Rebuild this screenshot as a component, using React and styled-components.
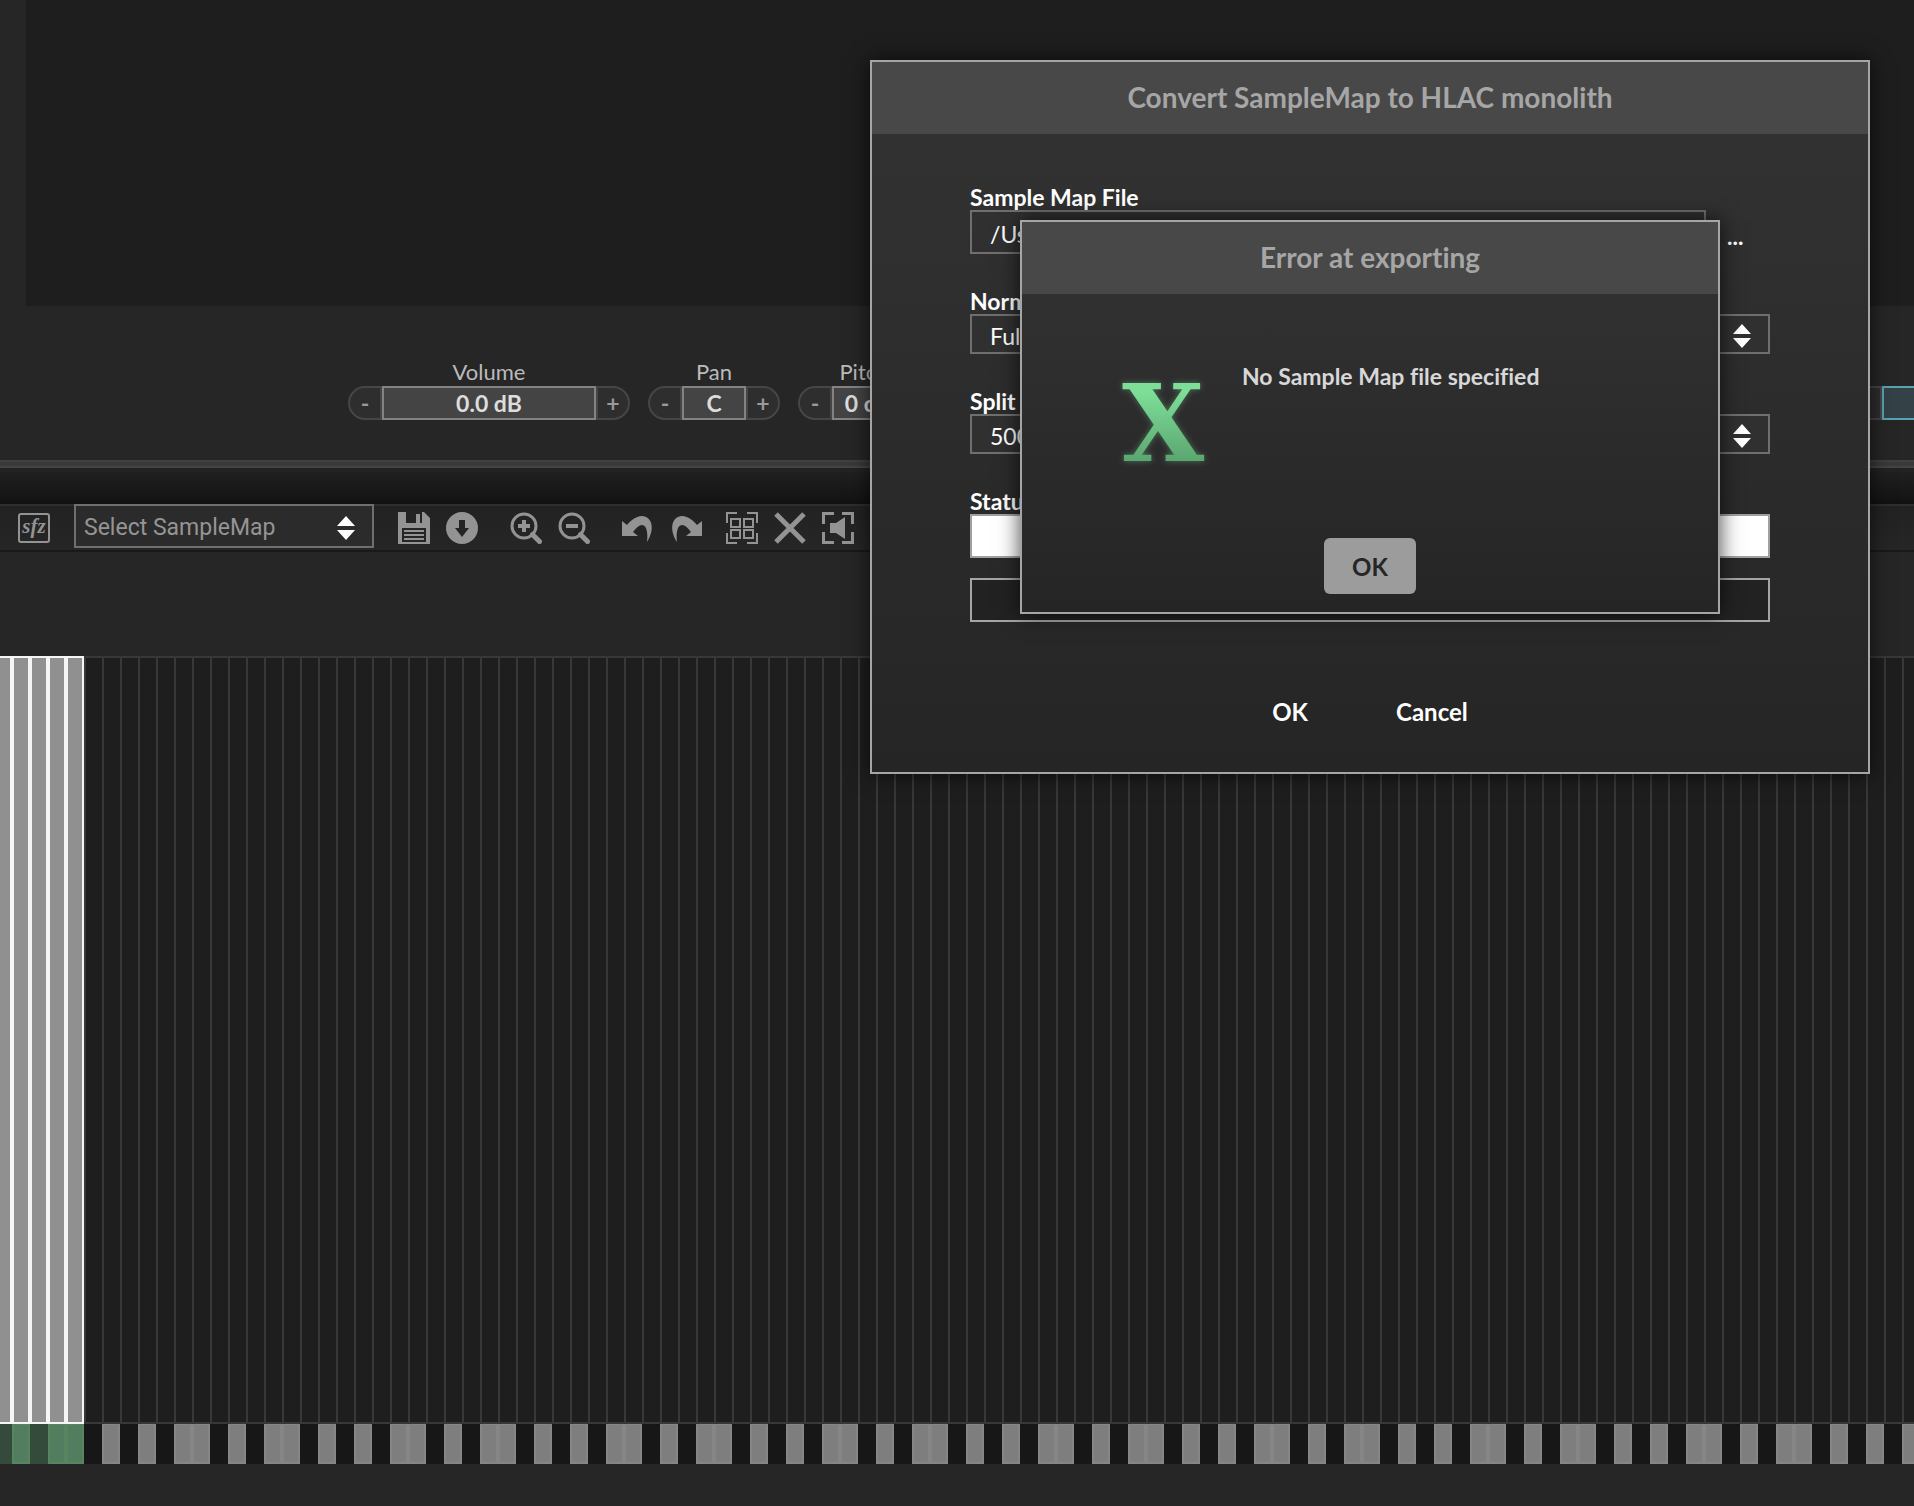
import React from 'react';
import styled, { createGlobalStyle, css } from 'styled-components';

const GlobalStyle = createGlobalStyle`
    * {
        box-sizing: border-box;
    }

    body {
        margin: 0;
        background: #262626;
        overflow: hidden;
    }

    button, input, select {
        font: inherit;
        margin: 0;
        border-radius: 0;
    }
`;

const NOTES = Array.from({ length: 128 }, (_, i) => i);
const SELECTED_NOTES = 5;

// the map is scrolled so that C# is the first note in view
const isBlackKey = (i) => [1, 3, 6, 8, 10].includes((i + 1) % 12);

function Icon({ children }) {
  return (
    <svg width="32" height="32" viewBox="0 0 32 32" fill="currentColor" aria-hidden="true">
      {children}
    </svg>
  );
}

function SfzIcon() {
  return (
    <Icon>
      <rect x="1" y="2" width="30" height="28" rx="2" fill="none" stroke="currentColor" strokeWidth="2" />
      <text x="16" y="21" textAnchor="middle" fontFamily="'Liberation Serif', serif" fontStyle="italic" fontWeight="bold" fontSize="21">sfz</text>
    </Icon>
  );
}

function SaveIcon() {
  return (
    <Icon>
      <path fillRule="evenodd" d="M0 0H8V11H24V0H26L32 6V32H0ZM4 16V30H28V16Z" />
      <path d="M18 2h4v9h-4zM6 18h20v2H6zM6 22h20v2H6zM6 26h20v2H6z" />
    </Icon>
  );
}

function DownloadIcon() {
  return (
    <Icon>
      <path fillRule="evenodd" d="M16 0A16 16 0 1 1 16 32A16 16 0 1 1 16 0ZM13 8V16H9L16 25L23 16H19V8Z" />
    </Icon>
  );
}

function ZoomIcon({ plus }) {
  return (
    <Icon>
      <circle cx="14" cy="14" r="12" fill="none" stroke="currentColor" strokeWidth="3" />
      <path d="M22.5 22.5L29.5 29.5" stroke="currentColor" strokeWidth="5" strokeLinecap="round" />
      <path d={plus ? 'M8 12h4V8h4v4h4v4h-4v4h-4v-4H8z' : 'M8 12h12v4H8z'} />
    </Icon>
  );
}

const undoPath = 'M0 9L5 13C11 6 18 2 24 5C32 9 31 21 25 30C26 22 25 13 20 13C17 13 14 16 11 20L16 24H0Z';

function UndoIcon() {
  return <Icon><path d={undoPath} /></Icon>;
}

function RedoIcon() {
  return <Icon><path d={undoPath} transform="translate(32 0) scale(-1 1)" /></Icon>;
}

const cornersPath = 'M1 11V1H11M21 1H31V11M31 21V31H21M11 31H1V21';

function SelectAllIcon() {
  return (
    <Icon>
      <path d={cornersPath} fill="none" stroke="currentColor" strokeWidth="2" />
      <path d="M5 7h9v8H5zM18 7h9v8h-9zM5 18h9v8H5zM18 18h9v8h-9z" fill="none" stroke="currentColor" strokeWidth="2" />
    </Icon>
  );
}

function DeselectIcon() {
  return (
    <Icon>
      <path d="M2 2L30 30M30 2L2 30" stroke="currentColor" strokeWidth="5" />
    </Icon>
  );
}

function PreviewIcon() {
  return (
    <Icon>
      <path d="M1.5 12V1.5H12M20 1.5H30.5V12M30.5 20V30.5H20M12 30.5H1.5V20" fill="none" stroke="currentColor" strokeWidth="3" />
      <path d="M8 11h6l9-6v22l-9-6H8z" />
    </Icon>
  );
}

function Arrows() {
  return (
    <ArrowIcon width="20" height="24" viewBox="0 0 20 24" fill="#ffffff" aria-hidden="true">
      <path d="M10 0L19 10H1ZM10 24L1 14H19Z" />
    </ArrowIcon>
  );
}

function Stepper({ id, label, value, width }) {
  return (
    <Control>
      <ControlLabel htmlFor={id}>{label}</ControlLabel>
      <StepperRow>
        <StepButton $side="left" aria-label={`${label} down`}>-</StepButton>
        <StepValue id={id} $width={width} defaultValue={value} />
        <StepButton $side="right" aria-label={`${label} up`}>+</StepButton>
      </StepperRow>
    </Control>
  );
}

function ErrorDialog() {
  return (
    <ErrorWindow role="alertdialog" aria-labelledby="error-title">
      <DialogTitle id="error-title">Error at exporting</DialogTitle>
      <ErrorBody>
        <Logo aria-hidden="true">X</Logo>
        <Message>No Sample Map file specified</Message>
      </ErrorBody>
      <ErrorFooter>
        <PrimaryButton>OK</PrimaryButton>
      </ErrorFooter>
    </ErrorWindow>
  );
}

function ConvertDialog() {
  return (
    <ConvertWindow role="dialog" aria-labelledby="convert-title">
      <DialogTitle id="convert-title">Convert SampleMap to HLAC monolith</DialogTitle>
      <Form>
        <Field>
          <FieldLabel htmlFor="file">Sample Map File</FieldLabel>
          <FileRow>
            <FileInput id="file" defaultValue="/Users" />
            <BrowseButton aria-label="Browse">...</BrowseButton>
          </FileRow>
        </Field>
        <Field>
          <FieldLabel htmlFor="normalise">Normalization</FieldLabel>
          <SelectBox $height={40}>
            <DialogSelect id="normalise"><option>Full Dynamics</option></DialogSelect>
            <Arrows />
          </SelectBox>
        </Field>
        <Field>
          <FieldLabel htmlFor="split">Split size</FieldLabel>
          <SelectBox $height={40}>
            <DialogSelect id="split"><option>500 MB</option></DialogSelect>
            <Arrows />
          </SelectBox>
        </Field>
        <Field>
          <FieldLabel htmlFor="status">Status</FieldLabel>
          <StatusInput id="status" readOnly />
          <ProgressBar role="progressbar" aria-label="Progress" />
        </Field>
      </Form>
      <Actions>
        <TextButton>OK</TextButton>
        <TextButton>Cancel</TextButton>
      </Actions>
      <ErrorDialog />
    </ConvertWindow>
  );
}

function App() {
  return (
    <Container>
      <GlobalStyle />
      <Waveform />

      <Controls>
        <Stepper id="volume" label="Volume" value="0.0 dB" width={214} />
        <Stepper id="pan" label="Pan" value="C" width={64} />
        <Stepper id="pitch" label="Pitch" value="0 ct" width={64} />
        <EdgeStepper>
          <StepButton $side="left" aria-label="Decrease">-</StepButton>
          <ActiveValue />
        </EdgeStepper>
      </Controls>

      <Divider />
      <TabBar />

      <Toolbar>
        <ToolButton aria-label="Import SFZ"><SfzIcon /></ToolButton>
        <MapSelectBox $height={44}>
          <MapSelect aria-label="Sample map"><option>Select SampleMap</option></MapSelect>
          <Arrows />
        </MapSelectBox>
        <ToolGroup>
          <ToolButton aria-label="Save"><SaveIcon /></ToolButton>
          <ToolButton aria-label="Export"><DownloadIcon /></ToolButton>
        </ToolGroup>
        <ToolGroup $wide>
          <ToolButton aria-label="Zoom in"><ZoomIcon plus /></ToolButton>
          <ToolButton aria-label="Zoom out"><ZoomIcon /></ToolButton>
        </ToolGroup>
        <ToolGroup $wide>
          <ToolButton aria-label="Undo"><UndoIcon /></ToolButton>
          <ToolButton aria-label="Redo"><RedoIcon /></ToolButton>
        </ToolGroup>
        <ToolGroup>
          <ToolButton aria-label="Select all"><SelectAllIcon /></ToolButton>
          <ToolButton aria-label="Deselect all"><DeselectIcon /></ToolButton>
          <ToolButton aria-label="Preview"><PreviewIcon /></ToolButton>
        </ToolGroup>
      </Toolbar>

      <MapArea>
        <NoteRow $grow>
          {NOTES.map((i) => <Zone key={i} $selected={i < SELECTED_NOTES} />)}
        </NoteRow>
        <NoteRow>
          {NOTES.map((i) => <Key key={i} $black={isBlackKey(i)} $selected={i < SELECTED_NOTES} />)}
        </NoteRow>
      </MapArea>

      <ConvertDialog />
    </Container>
  );
}

export default App;

const Container = styled.div`
    position: relative;
    display: flex;
    flex-direction: column;
    min-height: 100vh;
    overflow: hidden;
    background: #262626;
    color: #ffffff;
    font-family: Lato, sans-serif;
    font-size: 23px;
    font-variant-ligatures: none;
    line-height: 28px;
`;

const Waveform = styled.div`
    height: 306px;
    margin-left: 26px;
    background: #1e1e1e;
`;

const Controls = styled.div`
    display: flex;
    align-items: flex-end;
    gap: 18px;
    padding: 52px 0 40px 348px;
`;

const Control = styled.div`
    display: flex;
    flex-direction: column;
    align-items: center;
`;

const ControlLabel = styled.label`
    color: #bbbbbb;
    font-size: 22px;
`;

const StepperRow = styled.div`
    display: flex;
    height: 34px;
`;

const StepButton = styled.button`
    width: 34px;
    height: 34px;
    padding: 0;
    border: 2px solid #464646;
    border-radius: ${(props) => (props.$side === 'left' ? '17px 0 0 17px' : '0 17px 17px 0')};
    background: #2e2e2e;
    color: #999999;
    font-weight: bold;
    line-height: 28px;
`;

const StepValue = styled.input`
    width: ${(props) => props.$width}px;
    padding: 0;
    border: 2px solid #838383;
    background: #444444;
    color: #dddddd;
    font-weight: bold;
    text-align: center;
`;

const EdgeStepper = styled(StepperRow)`
    margin-left: auto;
`;

const ActiveValue = styled.div`
    width: 32px;
    border: 2px solid #5aa3b3;
    border-right: none;
    background: #344247;
`;

const Divider = styled.div`
    height: 8px;
    border-top: 2px solid #414141;
    border-bottom: 2px solid #444444;
    background: #393939;
`;

const TabBar = styled.div`
    height: 36px;
    border-top: 4px solid #222222;
    border-bottom: 4px solid #121212;
    background: linear-gradient(#202020, #141414);
`;

const Toolbar = styled.div`
    display: flex;
    align-items: flex-start;
    gap: 24px;
    height: 48px;
    padding-left: 18px;
    border-bottom: 2px solid #191919;
    background: linear-gradient(#2e2e2e 2px, #222222 2px, #262626);
`;

const ToolGroup = styled.div`
    display: flex;
    gap: 16px;
    margin-right: ${(props) => (props.$wide ? '0' : '8px')};

    & + & {
        margin-right: ${(props) => (props.$wide ? '8px' : '0')};
    }

    & + & + & {
        margin-right: 0;
    }
`;

const ToolButton = styled.button`
    display: flex;
    margin-top: 8px;
    padding: 0;
    border: none;
    background: none;
    color: #939393;
`;

const SelectBox = styled.div`
    display: grid;
    align-items: center;
    height: ${(props) => props.$height}px;

    & > * {
        grid-area: 1 / 1;
    }
`;

const MapSelectBox = styled(SelectBox)`
    width: 300px;
`;

const ArrowIcon = styled.svg`
    justify-self: end;
    margin: 4px 18px 0 0;
    pointer-events: none;
`;

const selectStyle = css`
    appearance: none;
    width: 100%;
    height: 100%;
    border: 2px solid #6f6f6f;
    outline: none;
`;

const MapSelect = styled.select`
    ${selectStyle}
    padding: 4px 8px 0;
    background: #2b2b2b;
    color: #959595;
    font-family: Roboto, sans-serif;
`;

const DialogSelect = styled.select`
    ${selectStyle}
    padding: 3px 18px 0;
    background: #303030;
    color: #ffffff;
`;

const MapArea = styled.div`
    display: flex;
    flex: 1;
    flex-direction: column;
    padding: 104px 0 42px;
`;

const NoteRow = styled.div`
    display: flex;
    flex: ${(props) => (props.$grow ? '1' : '0 0 40px')};
    margin-left: -6px;
    background: #1e1e1e;
`;

const Zone = styled.div`
    flex: 0 0 18px;
    border: 2px solid #383838;
    border-right: none;

    ${(props) => props.$selected && css`
        border: 2px solid #f5f5f5;
        background: #909090;
    `}
`;

const Key = styled.div`
    flex: 0 0 18px;
    border: 2px solid #868686;
    border-top-width: 1px;
    background: #7e7e7e;

    ${(props) => props.$selected && css`
        border-color: #56855f;
        background: #527d5e;
    `}

    ${(props) => props.$black && css`
        border: none;
        background: ${props.$selected ? '#344a3a' : '#171717'};
    `}
`;

const dialogStyle = css`
    position: absolute;
    border: 2px solid #a5a5a5;
    background: linear-gradient(#333333, #252525);
    box-shadow: 0 0 20px rgba(0, 0, 0, 0.7);
`;

const ConvertWindow = styled.section`
    ${dialogStyle}
    top: 60px;
    right: 44px;
    width: 1000px;
`;

const ErrorWindow = styled.section`
    ${dialogStyle}
    inset: 0;
    width: 700px;
    height: fit-content;
    margin: auto;
`;

const DialogTitle = styled.h2`
    margin: 0;
    padding-bottom: 2px;
    background: #484848;
    color: #a6a6a6;
    font-size: 28px;
    line-height: 70px;
    text-align: center;
`;

const Form = styled.div`
    display: flex;
    flex-direction: column;
    gap: 32px;
    padding: 48px 98px 0;
`;

const Field = styled.div`
    display: flex;
    flex-direction: column;
`;

const FieldLabel = styled.label`
    height: 28px;
    font-weight: bold;
    line-height: 30px;
`;

const FileRow = styled.div`
    display: flex;
    gap: 16px;
    height: 44px;
`;

const FileInput = styled.input`
    flex: 1;
    min-width: 0;
    padding: 4px 18px 0;
    border: 2px solid #6f6f6f;
    background: #303030;
    color: #ffffff;
`;

const BrowseButton = styled.button`
    width: 48px;
    padding: 8px 0 0 5px;
    border: none;
    background: none;
    color: #ffffff;
    font-weight: bold;
    text-align: left;
`;

const StatusInput = styled.input`
    height: 44px;
    border: 2px solid #a0a0a0;
    background: #ffffff;
`;

const ProgressBar = styled.div`
    height: 44px;
    margin-top: 20px;
    border: 2px solid #a5a5a5;
    background: #222222;
`;

const Actions = styled.div`
    display: flex;
    justify-content: center;
    gap: 16px;
    padding: 60px 0 32px;
`;

const TextButton = styled.button`
    height: 58px;
    padding: 2px 36px 0;
    border: none;
    background: none;
    color: #ffffff;
    font-size: 24px;
    font-weight: bold;
`;

const ErrorBody = styled.div`
    display: flex;
    height: 244px;
    padding: 68px 100px 0;
`;

const Logo = styled.span`
    width: 120px;
    background: linear-gradient(#7ede98 30px, #57a06c 106px);
    background-clip: text;
    color: transparent;
    filter: drop-shadow(0 0 3px rgba(126, 222, 152, 0.4));
    font-family: 'DejaVu Serif', serif;
    font-size: 106px;
    font-weight: bold;
    line-height: 124px;
`;

const Message = styled.p`
    margin: 0;
    color: #d8d8d8;
    font-weight: bold;
`;

const ErrorFooter = styled.div`
    display: flex;
    justify-content: center;
    padding-bottom: 18px;
`;

const PrimaryButton = styled.button`
    width: 92px;
    height: 56px;
    padding: 2px 0 0;
    border: none;
    border-radius: 6px;
    background: #9c9c9c;
    color: #262626;
    font-size: 24px;
    font-weight: bold;
`;
